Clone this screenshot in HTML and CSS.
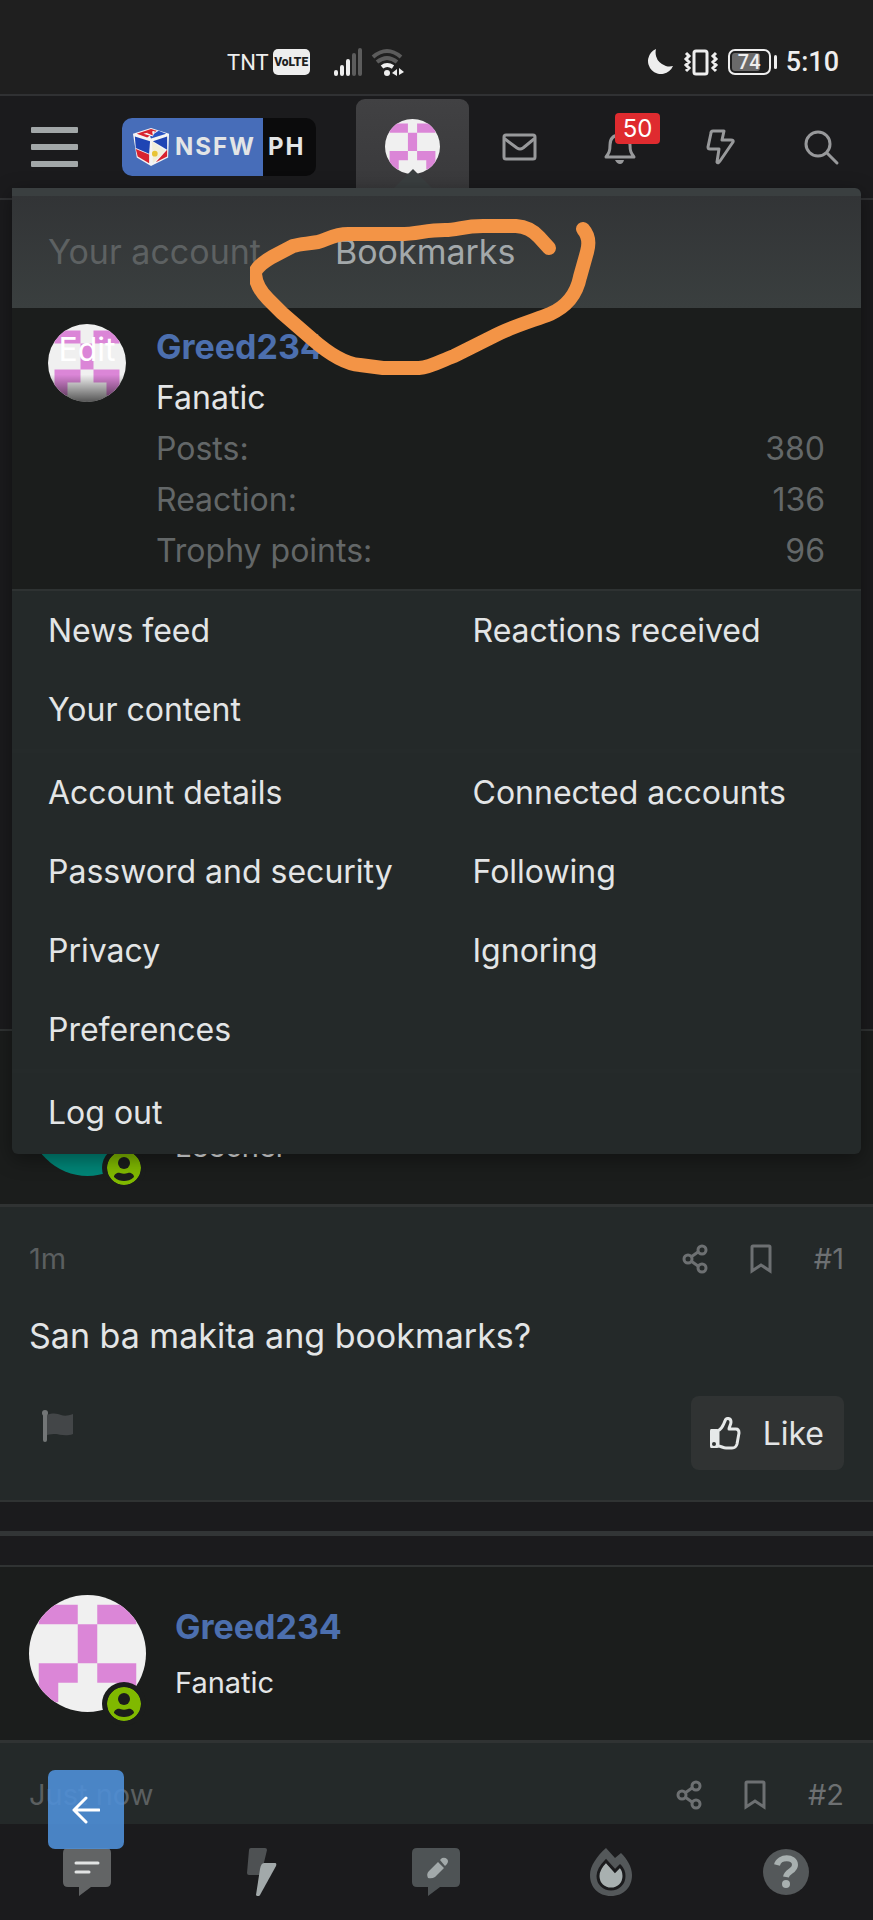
FILE: index.html
```html
<!DOCTYPE html>
<html lang="en">
<head>
  <meta charset="UTF-8" />
  <meta name="viewport" content="width=device-width, initial-scale=1.0" />
  <title>NSFW PH - Bookmarks</title>
  <link rel="stylesheet" href="styles.css">
</head>
<body>
  <!-- shared shapes -->
  <svg class="defs" aria-hidden="true">
    <symbol id="identicon" viewBox="0 0 12 12">
      <rect width="12" height="12" fill="#f0f0f0" />
      <path fill="#db86d7" d="M1 1h4v2H1zM7 1h4v2H7zM5 3h2v4H5zM1 7h4v2H3v2H1zM7 7h4v4H9V9H7z" />
    </symbol>
    <symbol id="online" viewBox="0 0 34 34">
      <circle cx="17" cy="17" r="17" fill="#80b900" />
      <circle cx="17" cy="12" r="6" fill="#1b1d1c" />
      <path fill="#1b1d1c" d="M7 26c0-3 4-5 6-4 3 1 5 1 8 0 2-1 6 1 6 4-3 3-7 4-10 4s-7-1-10-4z" />
    </symbol>
    <symbol id="share" viewBox="0 0 26 30">
      <g fill="none" stroke="currentColor" stroke-width="3">
        <circle cx="20" cy="6" r="4" /><circle cx="6" cy="15" r="4" /><circle cx="20" cy="24" r="4" />
        <path d="M9 13l7-5M9 17l7 5" />
      </g>
    </symbol>
    <symbol id="bookmark" viewBox="0 0 22 30">
      <path fill="none" stroke="currentColor" stroke-width="3" d="M2 27V3q0-1 1-1h16q1 0 1 1v24l-9-6z" />
    </symbol>
  </svg>

  <div class="page">
    <div class="statusbar">
      <div class="status-left">
        <span class="carrier">TNT</span>
        <span class="volte">VoLTE</span>
        <svg class="signal" viewBox="0 0 28 28" width="28" height="28">
          <g stroke-width="4" stroke-linecap="round">
            <path stroke="#eee" d="M2 24v2M8 19v7M14 13v13" />
            <path stroke="#5c5c5c" d="M20 7v19M26 2v24" />
          </g>
        </svg>
        <svg viewBox="0 0 34 28" width="34" height="28">
          <g fill="none" stroke-width="4">
            <path stroke="#5c5c5c" d="M2 9Q16-3 30 9M6 14q10-8 20 0" />
            <path stroke="#eee" d="M11 19q5-4 11 0" />
          </g>
          <circle cx="16" cy="25" r="3" fill="#eee" />
          <path fill="#eee" d="M26 21v7l-5-3zM28 20v7l5-3z" />
        </svg>
      </div>
      <div class="status-right">
        <svg viewBox="0 0 28 28" width="28" height="28"><path fill="#eee" d="M10 1A13 13 0 1 0 27 18 14 14 0 0 1 10 1z" /></svg>
        <svg viewBox="0 0 36 28" width="36" height="28">
          <g fill="none" stroke="#eee" stroke-width="3">
            <rect x="11" y="3" width="13" height="23" rx="2" />
            <path d="M3 5l3 3-3 3 3 3-3 3 3 3-3 3M33 5l-3 3 3 3-3 3 3 3-3 3 3 3" />
          </g>
        </svg>
        <span class="battery"><span class="battery-level">74</span></span>
        <span class="clock">5:10</span>
      </div>
    </div>

    <header class="header">
      <button class="hamburger" aria-label="Menu"><span></span><span></span><span></span></button>
      <a class="logo" href="#">
        <span class="logo-main">
          <svg viewBox="0 0 40 42" width="38" height="40">
            <path fill="#f4f4f4" d="M20 1l19 6-1 25-18 9-15-9L1 7z" />
            <path fill="#d8232f" d="M5 7l15-5 6 2-10 7z" />
            <path fill="#2853c4" d="M28 4l8 3-16 5-1-2z" />
            <path fill="#f4f4f4" d="M12 7l10 3 2-6z" />
            <path fill="#d8232f" d="M15 6l6-2 1 5z" />
            <path fill="#1f45b4" d="M3 10l16 5-1 13-14-6z" />
            <path fill="#d8232f" d="M4 23l14 6v9L6 31z" />
            <path fill="#1f45b4" d="M22 15l15-5v14z" />
            <path fill="#d8232f" d="M37 24v7l-12 6z" />
            <path fill="#f1efda" d="M21 15l14 10-13 13z" />
            <circle cx="24" cy="28" r="3" fill="#e8c436" />
          </svg>
          <span>NSFW</span>
        </span>
        <span class="logo-end">PH</span>
      </a>
      <nav class="nav">
        <button class="nav-item nav-active" aria-label="Account">
          <svg class="avatar avatar-xs"><use href="#identicon" /></svg>
          <span class="caret"></span>
        </button>
        <button class="nav-item" aria-label="Inbox">
          <svg viewBox="0 0 34 34" width="34" height="34" class="line-icon"><rect x="2" y="5" width="31" height="24" rx="2" /><path d="M3 9l12 9q3 2 6 0L32 9" /></svg>
        </button>
        <button class="nav-item" aria-label="Alerts">
          <svg viewBox="0 0 34 34" width="34" height="34" class="line-icon"><path d="M3 27c3-4 4-6 4-12 0-7 4-10 10-10s10 3 10 10c0 6 1 8 4 12z" /><path class="solid" d="M12 30h9q-1 4-4 4t-5-4z" /></svg>
          <span class="count">50</span>
        </button>
        <button class="nav-item" aria-label="What's new">
          <svg viewBox="0 0 34 34" width="34" height="34" class="line-icon"><path d="M10 1h11l-2 9h9q3 0 2 2L17 31q-2 3-3 1l2-13H7q-2 0-2-2L8 3q0-2 2-2z" /></svg>
        </button>
        <button class="nav-item" aria-label="Search">
          <svg viewBox="0 0 34 34" width="34" height="34" class="line-icon"><circle cx="14" cy="14" r="12" /><path d="M23 23l10 10" /></svg>
        </button>
      </nav>

      <div class="menu">
        <div class="menu-tabs">
          <a class="menu-tab current" href="#">Your account</a>
          <a class="menu-tab" href="#">Bookmarks</a>
        </div>
        <div class="profile">
          <a class="profile-avatar" href="#">
            <svg class="avatar avatar-s"><use href="#identicon" /></svg>
            <span class="edit">Edit</span>
          </a>
          <div class="profile-info">
            <a class="username" href="#">Greed234</a>
            <div>Fanatic</div>
            <dl class="stats">
              <dt>Posts:</dt><dd>380</dd>
              <dt>Reaction:</dt><dd>136</dd>
              <dt>Trophy points:</dt><dd>96</dd>
            </dl>
          </div>
        </div>
        <div class="links">
          <a href="#">News feed</a><a href="#">Reactions received</a>
          <a href="#">Your content</a>
        </div>
        <div class="links">
          <a href="#">Account details</a><a href="#">Connected accounts</a>
          <a href="#">Password and security</a><a href="#">Following</a>
          <a href="#">Privacy</a><a href="#">Ignoring</a>
          <a href="#">Preferences</a>
        </div>
        <div class="links">
          <a href="#">Log out</a>
        </div>
      </div>
    </header>

    <main>
      <div class="thread-top"></div>

      <article class="post">
        <div class="post-user">
          <div class="user-avatar">
            <div class="avatar avatar-m teal"></div>
            <svg class="badge"><use href="#online" /></svg>
          </div>
          <div>
            <a class="username" href="#">Member</a>
            <div class="rank">Leecher</div>
          </div>
        </div>
        <div class="post-content">
          <div class="post-meta">
            <time>1m</time>
            <a href="#" aria-label="Share"><svg width="26" height="30"><use href="#share" /></svg></a>
            <a href="#" aria-label="Add bookmark"><svg width="22" height="30"><use href="#bookmark" /></svg></a>
            <a href="#">#1</a>
          </div>
          <p class="post-text">San ba makita ang bookmarks?</p>
          <div class="post-actions">
            <button class="flag" aria-label="Report">
              <svg viewBox="0 0 32 34" width="32" height="34">
                <path fill="#434648" d="M5 6c7-3 11-1 14 0s7 1 12-1v20c-8 3-14 0-17 0s-6 0-9 1z" />
                <path stroke="#737677" stroke-width="4" stroke-linecap="round" d="M3 5v26" />
                <circle cx="3" cy="4" r="3" fill="#737677" />
              </svg>
            </button>
            <button class="like">
              <svg viewBox="0 0 32 34" width="32" height="34">
                <path fill="none" stroke="#e6e9e9" stroke-width="3" stroke-linejoin="round" d="M9 15c5-3 5-6 7-10 1-4 6-3 6 1 0 3-2 5-2 7h7q3 0 3 4l-2 11q-1 4-5 4h-6c-3 0-5-2-8-2z" />
                <path fill="#e6e9e9" d="M2 13h6q2 0 2 2v15q0 2-2 2H2q-1 0-1-2V15q0-2 1-2z" />
                <circle cx="5" cy="28" r="2" fill="#303333" />
              </svg>
              <span>Like</span>
            </button>
          </div>
        </div>
      </article>

      <div class="divider"></div>

      <article class="post">
        <div class="post-user">
          <div class="user-avatar">
            <svg class="avatar avatar-m"><use href="#identicon" /></svg>
            <svg class="badge"><use href="#online" /></svg>
          </div>
          <div>
            <a class="username" href="#">Greed234</a>
            <div class="rank">Fanatic</div>
          </div>
        </div>
        <div class="post-content">
          <div class="post-meta">
            <time>Just now</time>
            <a href="#" aria-label="Share"><svg width="26" height="30"><use href="#share" /></svg></a>
            <a href="#" aria-label="Add bookmark"><svg width="22" height="30"><use href="#bookmark" /></svg></a>
            <a href="#">#2</a>
          </div>
        </div>
      </article>
    </main>

    <svg class="scribble" viewBox="0 0 350 160" width="350" height="160" aria-hidden="true">
      <path d="M299 33L289 22Q280 12 266 11H233C213 11 208 15 195 15C175 15 168 19 150 19H98C85 19 78 24 68 27C55 29 50 29 43 31L22 42Q5 52 5 59Q6 72 18 84L32 98L62 124C78 138 95 149 110 150L133 153H169C182 152 190 146 204 141L244 121C263 111 285 105 300 99C318 91 327 77 330 62L337 37Q341 23 333 14" />
    </svg>
  </div>

  <button class="back" aria-label="Back">
    <svg viewBox="0 0 28 28" width="28" height="28"><path d="M27 14H2M14 2L2 14l12 12" /></svg>
  </button>

  <nav class="bottom-nav">
    <a href="#" aria-label="Forums">
      <svg viewBox="0 0 48 48" width="48" height="48"><path fill="#626465" d="M5 0h38q5 0 5 5v29q0 5-5 5H28l-12 9v-9H5q-5 0-5-5V5q0-5 5-5z" /><path stroke="#e2e4e4" stroke-width="3" stroke-linecap="round" d="M13 15h22M13 24h13" /></svg>
    </a>
    <a href="#" aria-label="What's new">
      <svg viewBox="0 0 48 48" width="48" height="48"><path fill="#4e5153" d="M13 0h14q2 0 2 2l-6 25H11q-2 0-2-2L11 2q0-2 2-2z" /><path fill="#a2a9aa" d="M26 15h11q2 0 1 3L22 47q-2 3-4 0l4-26q1-6 4-6z" /></svg>
    </a>
    <a href="#" aria-label="Post thread">
      <svg viewBox="0 0 48 48" width="48" height="48"><path fill="#4e5355" d="M5 0h38q5 0 5 5v29q0 5-5 5H28l-12 9v-9H5q-5 0-5-5V5q0-5 5-5z" /><path fill="#a2a9aa" d="M26 14l6 6-9 9q-3 2-7 1-2-4 1-7zM28 12l2-2q3-1 5 1t0 5l-2 2z" /></svg>
    </a>
    <a href="#" aria-label="Trending">
      <svg viewBox="0 0 48 48" width="48" height="48"><path fill="#54585a" d="M19 0l9 10 6-5c6 6 11 14 11 22 0 12-8 21-21 21S3 39 3 27C3 18 10 8 19 0z" /><path fill="#a8b0b0" stroke="#1b1b1d" stroke-width="3" d="M19 13l9 10 5-5c3 3 4 6 4 10 0 8-6 13-13 13s-13-5-13-13c0-6 4-11 8-15z" /></svg>
    </a>
    <a href="#" aria-label="Help">
      <svg viewBox="0 0 48 48" width="48" height="48"><circle cx="24" cy="24" r="23" fill="#54585a" /><path fill="none" stroke="#a8b0b0" stroke-width="6" d="M15 17c2-9 18-9 18 0 0 6-8 6-9 12" /><circle cx="24" cy="36" r="4" fill="#a8b0b0" /></svg>
    </a>
  </nav>
</body>
</html>
```
FILE: styles.css
```css
* { box-sizing: border-box; }
body { margin: 0; background: #1b1b1d; color: #e3e5e6; font-family: Inter, "Liberation Sans", sans-serif; font-size: 32px; line-height: 51px; }
a { color: inherit; text-decoration: none; }
button { background: none; border: none; padding: 0; color: inherit; font: inherit; cursor: pointer; }
svg { display: block; }
.defs { position: absolute; width: 0; height: 0; }
.page { position: relative; height: 100vh; overflow: hidden; }

/* phone status bar */
.statusbar {
  display: flex; justify-content: space-between; align-items: center;
  height: 96px; padding: 30px 34px 0 227px; background: #1f1f1f;
  border-bottom: 2px solid #303133; font-family: Roboto, sans-serif; color: #eee;
}
.status-left, .status-right { display: flex; align-items: center; }
.status-right { gap: 9px; }
.carrier { font-size: 22px; }
.volte {
  margin: 0 24px 0 4px; width: 37px; background: #eee; color: #1f1f1f; border-radius: 5px;
  font: 900 12px/26px Roboto, sans-serif; text-align: center;
}
.signal { margin-right: 9px; }
.battery {
  position: relative; width: 43px; height: 26px; padding: 2px; margin-right: 6px;
  border: 2px solid #eee; border-radius: 7px; font: 500 20px/18px Roboto, sans-serif;
}
.battery::after { content: ""; position: absolute; right: -8px; top: 4px; width: 3px; height: 14px; border-radius: 2px; background: #eee; }
.battery-level { display: block; width: 28px; border-radius: 3px; background: #6a6a6a; text-indent: 6px; }
.clock { font-size: 27px; font-weight: 500; }

/* header */
.header { position: relative; z-index: 2; display: flex; align-items: center; padding: 3px 2px 4px 0; border-bottom: 2px solid #303133; }
.hamburger { display: grid; gap: 11px; width: 47px; margin-left: 31px; }
.hamburger span { height: 6px; border-radius: 1px; background: #a2a7a8; }
.logo { display: flex; margin-left: 44px; border-radius: 10px; overflow: hidden; background: #0b0b0c; font-size: 24px; font-weight: 700; line-height: 58px; letter-spacing: 2px; }
.logo-main { display: flex; align-items: center; gap: 5px; width: 141px; padding-left: 10px; background: #476db9; }
.logo-end { width: 53px; padding-left: 5px; }
.nav { display: flex; flex: 1; margin-left: 40px; }
.nav-item { position: relative; display: flex; flex: 1; height: 95px; align-items: center; justify-content: center; color: #98999b; }
.nav-active { flex: 0 0 113px; background: linear-gradient(#414143, #39393b); border-radius: 9px 9px 0 0; }
.line-icon { fill: none; stroke: currentColor; stroke-width: 3; stroke-linejoin: round; stroke-linecap: round; overflow: visible; }
.line-icon .solid { fill: currentColor; stroke: none; }
.caret { position: absolute; bottom: 6px; left: 38px; border: 19px solid transparent; border-top: 0; border-bottom-color: #3a3f40; }
.count { position: absolute; top: 14px; right: 10px; width: 45px; border-radius: 4px; background: #df2b2f; color: #fff; font-size: 24px; line-height: 31px; text-align: center; }

.avatar { border-radius: 50%; overflow: hidden; }
.avatar-xs { width: 55px; height: 55px; }
.avatar-s { width: 78px; height: 78px; }
.avatar-m { width: 117px; height: 117px; }
.teal { background: #008577; }

/* account menu */
.menu {
  position: absolute; top: 92px; left: 12px; right: 12px; padding-bottom: 2px; border-top: 8px solid #3a3f40;
  border-radius: 0 6px 6px 6px; background: #242929; box-shadow: 0 5px 20px rgba(0,0,0,0.4);
}
.menu-tabs { display: flex; height: 112px; background: linear-gradient(#323436, #3a3f3f); color: #a3a8aa; font-size: 34px; }
.menu-tab { padding: 30px 38px 0 36px; }
.current { color: #5d6162; }
.profile { display: flex; gap: 30px; padding: 13px 36px; background: #1b1d1c; border-bottom: 2px solid #2e3232; }
.profile-avatar { position: relative; height: 78px; margin-top: 3px; color: #fff; }
.profile-avatar::before { content: ""; position: absolute; inset: 0; border-radius: 50%; background: linear-gradient(transparent 65%, rgba(0,0,0,0.65)); }
.edit { position: absolute; inset: 0; text-align: center; }
.profile-info { flex: 1; }
.username { display: block; color: #4c6fae; font-size: 34px; font-weight: 700; }
.stats { display: grid; grid-template-columns: 1fr auto; margin: 0; color: #636768; }
.stats dd { margin: 0; text-align: right; }
.links { display: grid; grid-template-columns: 1fr 1fr; }
.links a { padding: 14px 0 14px 36px; }
.links + .links { border-top: 4px solid #252a2a; }

/* thread */
.thread-top { height: 829px; }
.post { border-top: 2px solid #303333; border-bottom: 2px solid #303333; background: #242929; }
.post-user { display: flex; gap: 29px; padding: 28px 29px; background: #1b1d1c; border-bottom: 3px solid #303333; }
.user-avatar { position: relative; }
.badge { position: absolute; left: 73px; top: 87px; width: 44px; height: 44px; padding: 5px; border-radius: 50%; background: #1b1d1c; }
.rank { font-size: 29px; line-height: 48px; }
.post-user .username { line-height: 64px; }
.post-content { padding: 30px 29px; }
.post-meta { display: flex; align-items: center; gap: 42px; color: #6d7072; font-size: 29px; line-height: 44px; }
.post-meta time { flex: 1; color: #5b5f60; }
.post-text { margin: 31px 0 36px; font-size: 34px; line-height: 48px; }
.post-actions { display: flex; justify-content: space-between; align-items: flex-start; }
.flag { padding: 13px; }
.like { display: flex; align-items: center; gap: 22px; height: 74px; padding: 0 20px 0 18px; border-radius: 8px; background: #303333; }
.divider { margin: 29px 0; height: 5px; background: #323536; }

/* hand-drawn circle over the tabs */
.scribble { position: absolute; z-index: 3; left: 250px; top: 215px; fill: none; stroke: #f39446; stroke-width: 14; stroke-linecap: round; stroke-linejoin: round; }

.back {
  position: fixed; z-index: 5; left: 48px; bottom: 71px; width: 76px; height: 79px;
  display: flex; align-items: center; justify-content: center; border-radius: 7px; background: rgba(79,143,215,0.9);
}
.back path { fill: none; stroke: #fff; stroke-width: 3; stroke-linecap: round; stroke-linejoin: round; }
.bottom-nav { position: fixed; z-index: 4; left: 0; right: 0; bottom: 0; display: flex; height: 96px; background: #1b1b1d; }
.bottom-nav a { flex: 1; display: flex; align-items: center; justify-content: center; }
```
